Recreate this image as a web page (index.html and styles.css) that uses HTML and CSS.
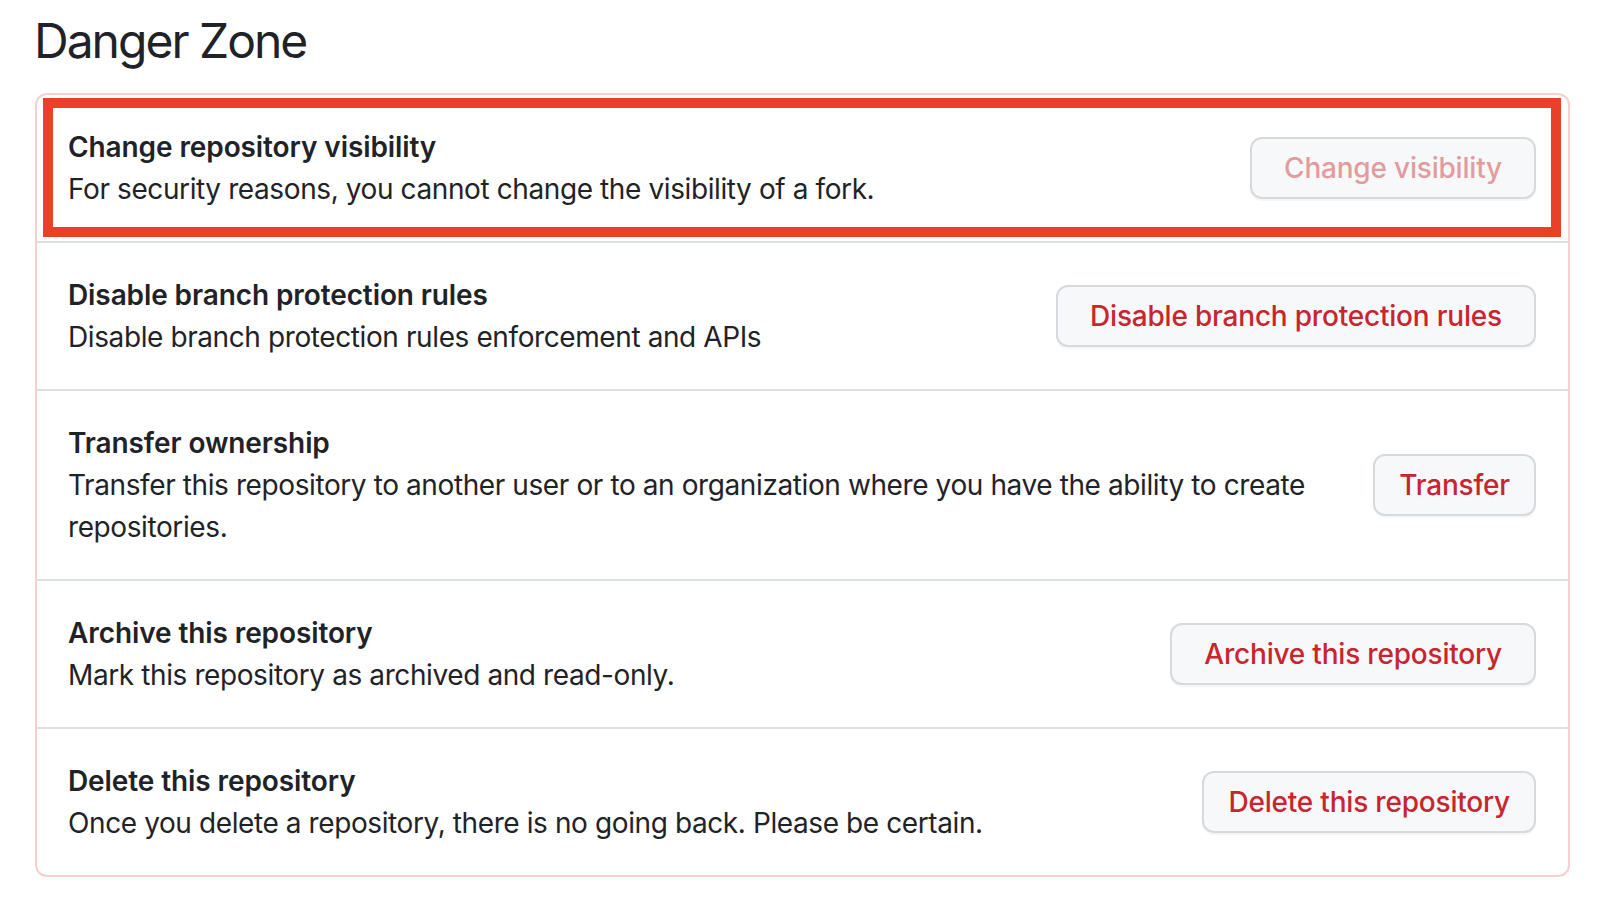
FILE: index.html
```html
<!DOCTYPE html>
<html lang="en">
<head>
<meta charset="utf-8">
<title>Danger Zone</title>
<link rel="stylesheet" href="styles.css">
</head>
<body>
<main class="page">
  <h2 class="heading">Danger Zone</h2>
  <div class="box">
    <div class="row row-highlight">
      <div class="row-text">
        <div class="row-title">Change repository visibility</div>
        <div class="row-desc">For security reasons, you cannot change the visibility of a fork.</div>
      </div>
      <button class="btn btn-disabled" disabled>Change visibility</button>
      <span class="highlight"></span>
    </div>
    <div class="row">
      <div class="row-text">
        <div class="row-title">Disable branch protection rules</div>
        <div class="row-desc">Disable branch protection rules enforcement and APIs</div>
      </div>
      <button class="btn">Disable branch protection rules</button>
    </div>
    <div class="row">
      <div class="row-text">
        <div class="row-title">Transfer ownership</div>
        <div class="row-desc">Transfer this repository to another user or to an organization where you have the ability to create repositories.</div>
      </div>
      <button class="btn btn-compact">Transfer</button>
    </div>
    <div class="row">
      <div class="row-text">
        <div class="row-title">Archive this repository</div>
        <div class="row-desc">Mark this repository as archived and read-only.</div>
      </div>
      <button class="btn">Archive this repository</button>
    </div>
    <div class="row">
      <div class="row-text">
        <div class="row-title">Delete this repository</div>
        <div class="row-desc">Once you delete a repository, there is no going back. Please be certain.</div>
      </div>
      <button class="btn btn-compact">Delete this repository</button>
    </div>
  </div>
</main>
</body>
</html>
```
FILE: styles.css
```css
* { box-sizing: border-box; }

html, body {
  margin: 0;
  padding: 0;
  background: #ffffff;
}

body {
  font-family: Inter, "Noto Sans", "Liberation Sans", sans-serif;
  color: #1f2328;
}

.page {
  padding: 5px 32px 0 35px;
}

.heading {
  margin: 0 0 16px -1px;
  font-size: 48px;
  font-weight: 400;
  line-height: 72px;
  color: #1f2328;
  letter-spacing: -2px;
}

.box {
  border: 2px solid #f8cfcf;
  border-radius: 12px;
  width: 1535px;
}

.row {
  position: relative;
  display: flex;
  align-items: center;
  padding: 31px 32px 31px 31px;
  border-top: 2px solid #dde1e6;
}

.row:first-child {
  border-top: 0;
}

.row-text {
  flex: 1;
  min-width: 0;
  font-size: 28px;
  line-height: 42px;
}

.row-title {
  font-weight: 600;
  letter-spacing: -0.1px;
}

.row-desc {
  font-weight: 400;
  letter-spacing: -0.4px;
}

.btn {
  flex: none;
  margin-left: 32px;
  height: 62px;
  padding: 0 32px;
  font-family: inherit;
  font-size: 28px;
  font-weight: 500;
  letter-spacing: -0.2px;
  color: #c9252e;
  background: #f6f8fa;
  border: 2px solid #d6d9dd;
  border-radius: 12px;
  box-shadow: 0 2px 0 rgba(31, 35, 40, 0.04);
  cursor: pointer;
}

.btn-compact {
  padding: 0 24px;
}

.btn-disabled {
  color: #e29c9e;
  cursor: default;
}

.highlight {
  position: absolute;
  left: 6px;
  right: 7px;
  top: 3px;
  bottom: 4px;
  border: 10px solid #e84127;
  pointer-events: none;
}
```
